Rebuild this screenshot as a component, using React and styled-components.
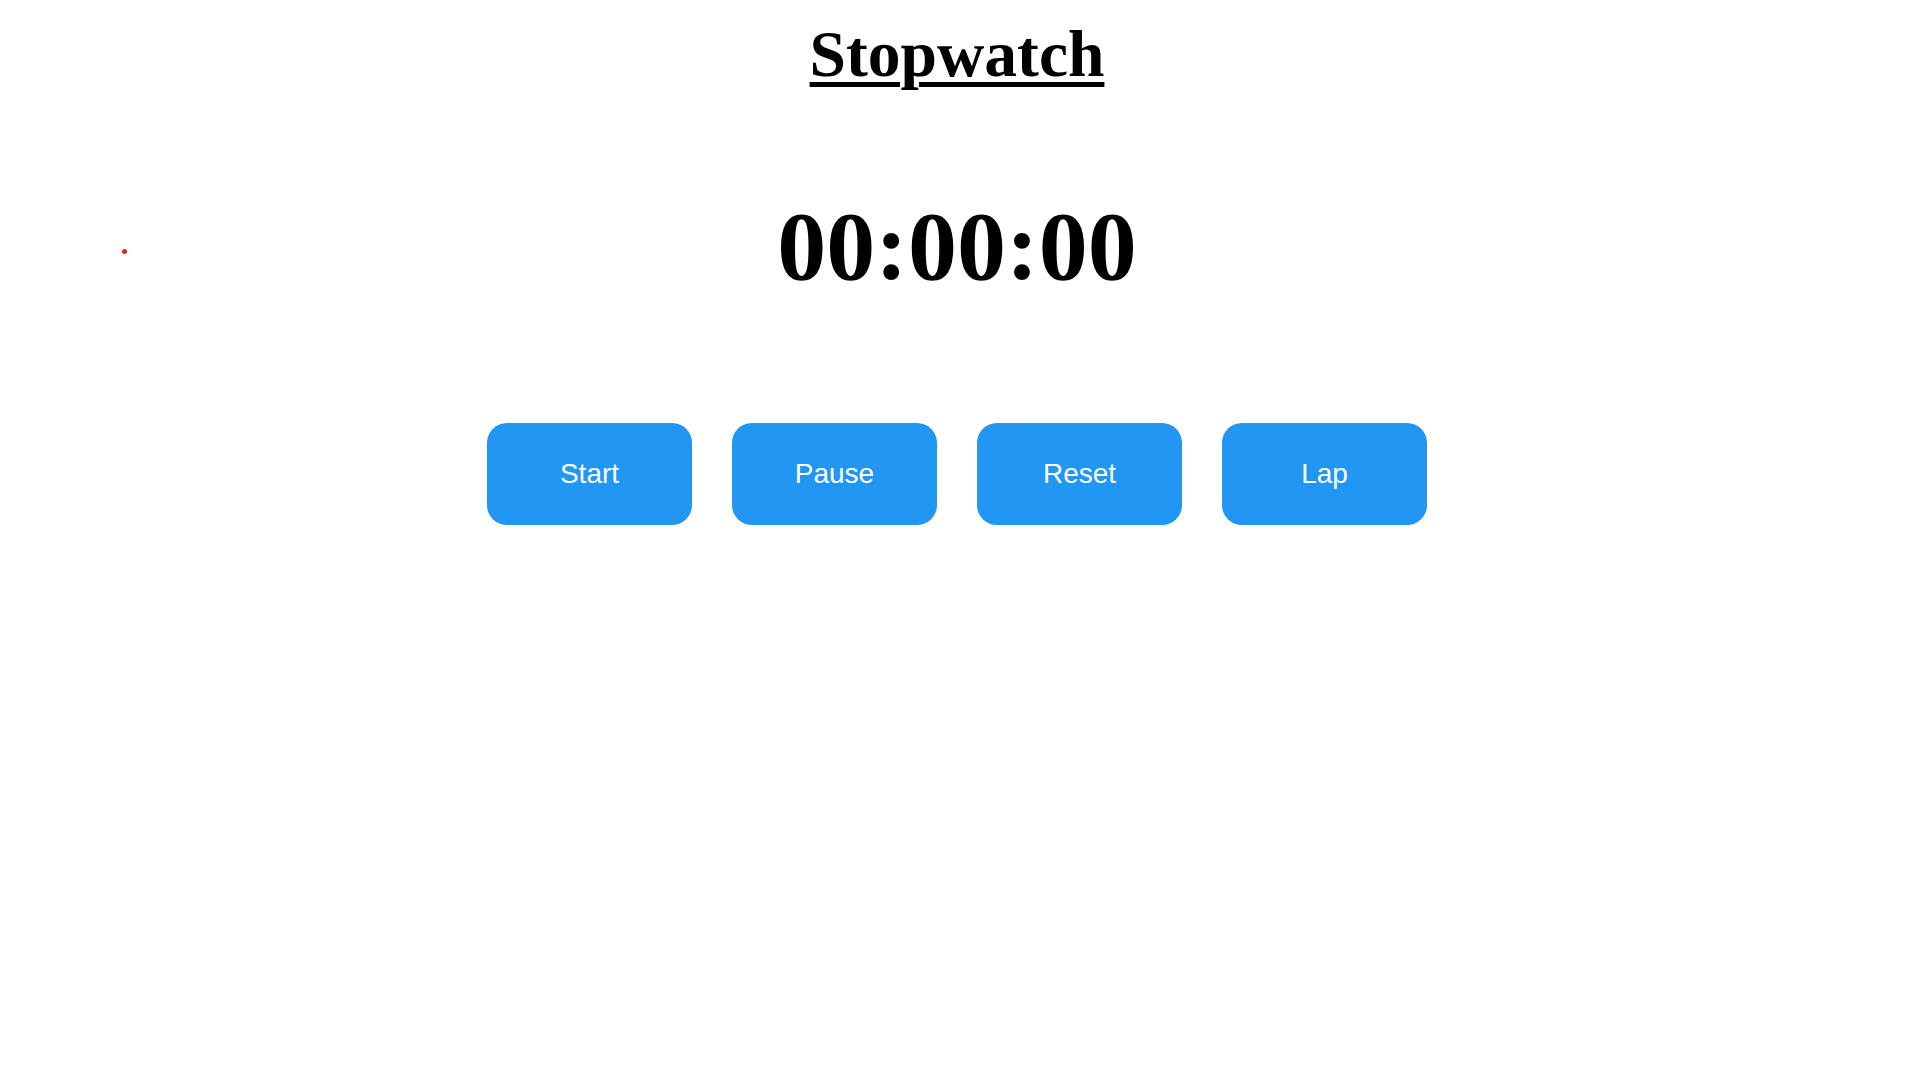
import React from "react";
import styled, { createGlobalStyle } from "styled-components";

const Global = createGlobalStyle`
  html, body { margin: 0; padding: 0; background: #ffffff; }
  body { font-family: "Liberation Serif", "Times New Roman", serif; }
`;

const Page = styled.main`
  position: relative;
  width: 1914px;
  min-height: 1080px;
  display: flex;
  flex-direction: column;
  align-items: center;
  padding-top: 17px;
  box-sizing: border-box;
`;

const Title = styled.h1`
  margin: 0;
  font-family: "Liberation Serif", "Times New Roman", serif;
  font-size: 65.5px;
  font-weight: 700;
  line-height: 75px;
  text-decoration: underline;
  text-decoration-thickness: 4.5px;
  text-underline-offset: 6px;
  color: #000;
`;

const Display = styled.div`
  margin-top: 98px;
  font-family: "Liberation Serif", "Times New Roman", serif;
  font-size: 98px;
  font-weight: 700;
  line-height: 113px;
  color: #000;
`;

const Controls = styled.div`
  margin-top: 120px;
  display: flex;
  gap: 40px;
`;

const Button = styled.button`
  width: 205px;
  height: 102px;
  border: none;
  border-radius: 20px;
  background: #2196f3;
  color: #ffffff;
  font-family: "Liberation Sans", Arial, sans-serif;
  font-size: 28px;
  cursor: pointer;
`;

const Dot = styled.span`
  position: absolute;
  left: 122px;
  top: 249px;
  width: 5px;
  height: 5px;
  border-radius: 50%;
  background: #d42a2a;
`;

export default function App() {
  return (
    <>
      <Global />
      <Page>
        <Dot />
        <Title>Stopwatch</Title>
        <Display>00:00:00</Display>
        <Controls>
          <Button>Start</Button>
          <Button>Pause</Button>
          <Button>Reset</Button>
          <Button>Lap</Button>
        </Controls>
      </Page>
    </>
  );
}
